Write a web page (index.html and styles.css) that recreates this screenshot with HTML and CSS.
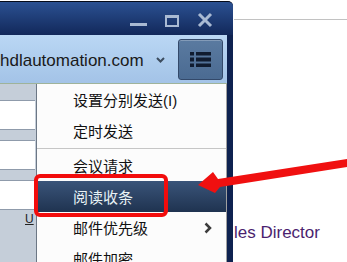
FILE: index.html
```html
<!DOCTYPE html>
<html lang="zh-CN">
<head>
    <meta charset="UTF-8">
    <meta name="viewport" content="width=device-width, initial-scale=1.0">
    <title>邮件选项</title>
    <link rel="stylesheet" href="styles.css">
</head>
<body>
    <!-- page behind the mail window -->
    <div class="page">
        <div class="page-rule"></div>
        <div class="page-title">les Director</div>
    </div>

    <div class="window">
        <div class="titlebar">
            <svg class="win-controls" width="90" height="33" viewBox="0 0 90 33">
                <rect x="0" y="21" width="17" height="3" fill="#a9bad3"/>
                <rect x="36" y="14" width="12" height="10" fill="none" stroke="#a9bad3" stroke-width="2"/>
                <rect x="35" y="13" width="14" height="3" fill="#a9bad3"/>
                <path d="M69 12 L81 24 M81 12 L69 24" stroke="#a9bad3" stroke-width="3"/>
            </svg>
        </div>

        <div class="toolbar">
            <span class="account">hdlautomation.com</span>
            <svg class="caret" width="9" height="6" viewBox="0 0 9 6">
                <polyline points="1,1 4.5,4.5 8,1" fill="none" stroke="#3c4c5e" stroke-width="2"/>
            </svg>
            <button class="menu-btn">
                <svg width="21" height="15" viewBox="0 0 21 15">
                    <rect x="0" y="0" width="4" height="3.5" fill="#101c30"/>
                    <rect x="6" y="0" width="15" height="3.5" fill="#101c30"/>
                    <rect x="0" y="5.5" width="4" height="4" fill="#101c30"/>
                    <rect x="6" y="5.5" width="15" height="4" fill="#101c30"/>
                    <rect x="0" y="11.5" width="4" height="3.5" fill="#101c30"/>
                    <rect x="6" y="11.5" width="15" height="3.5" fill="#101c30"/>
                </svg>
            </button>
        </div>

        <div class="content">
            <div class="side">
                <div class="fields">
                    <div class="field"></div>
                    <div class="field"></div>
                    <div class="field"></div>
                </div>
                <div class="side-u">U</div>
            </div>

            <ul class="menu">
                <li class="menu-item">设置分别发送(I)</li>
                <li class="menu-item">定时发送</li>
                <li class="menu-sep"></li>
                <li class="menu-item">会议请求</li>
                <li class="menu-item is-active">阅读收条</li>
                <li class="menu-item">邮件优先级
                    <svg class="sub-arrow" width="8" height="12" viewBox="0 0 8 12">
                        <polyline points="1.5,1.5 6,6 1.5,10.5" fill="none" stroke="#3d3d3d" stroke-width="2.5"/>
                    </svg>
                </li>
                <li class="menu-item">邮件加密</li>
            </ul>
        </div>
    </div>

    <!-- red annotation -->
    <div class="callout"></div>
    <svg class="arrow" width="347" height="262" viewBox="0 0 347 262">
        <polygon points="198,185 213,172 218,179 347,159 347,167 220,187 215,193" fill="#f01010"/>
    </svg>
</body>
</html>
```

FILE: styles.css
```css
body {
    margin: 0;
    width: 347px;
    height: 262px;
    overflow: hidden;
    position: relative;
    background-color: #fff;
    font-family: "Liberation Sans", "Noto Sans CJK SC", sans-serif;
}

/* background page */
.page {
    padding-left: 234px;
}
.page-rule {
    margin-top: 19px;
    border-top: 1px solid #c2c2c2;
}
.page-title {
    margin-top: 203px;
    font-size: 17px;
    line-height: 20px;
    color: #4b1f6f;
}

/* mail window */
.window {
    position: absolute;
    top: 1px;
    left: 0;
    width: 233px;
    height: 261px;
    box-sizing: border-box;
    border-top: 1px solid #050b1a;
    border-top-right-radius: 5px;
    background-color: #0e2250;
    overflow: hidden;
    display: flex;
    flex-direction: column;
}
.titlebar {
    height: 33px;
    flex: none;
    display: flex;
    justify-content: flex-end;
    padding-right: 13px;
    background: linear-gradient(#2b5192, #12285a);
}
.toolbar {
    height: 48px;
    flex: none;
    margin-right: 6px;
    padding-right: 4px;
    display: flex;
    align-items: center;
    background: linear-gradient(#bad7f4, #a3c3e7);
    border-bottom: 1px solid #9fb39a;
}
.account {
    flex: 1;
    font-size: 17px;
    color: #1a1a1a;
    margin-top: 3px;
    white-space: nowrap;
}
.caret {
    margin-right: 13px;
    margin-top: 2px;
}
.menu-btn {
    width: 45px;
    height: 41px;
    padding: 0;
    display: flex;
    align-items: center;
    justify-content: center;
    border: 1px solid #33496a;
    border-radius: 3px;
    background: linear-gradient(#5a7aa0, #4b6b92);
    box-shadow: inset 0 1px 0 rgba(255, 255, 255, 0.25);
}

.content {
    flex: 1;
    display: flex;
    margin-right: 6px;
    min-height: 0;
}
.side {
    width: 36px;
    flex: none;
    background-color: #c5ced9;
    padding-top: 16px;
}
.fields {
    display: flex;
    flex-direction: column;
    gap: 10px;
}
.field {
    width: 35px;
    height: 30px;
    box-sizing: border-box;
    background-color: #fff;
    border-top: 1px solid #8f9bab;
    border-bottom: 1px solid #8f9bab;
}
.side-u {
    margin-top: 2px;
    padding-left: 25px;
    font-size: 12px;
    line-height: 14px;
    color: #222;
    text-decoration: underline;
}

/* popup menu */
.menu {
    flex: 1;
    margin: 0;
    padding: 0;
    list-style: none;
    background-color: #fcfcfc;
    border-left: 1px solid #6c7785;
    border-right: 1px solid #a0a0a0;
}
.menu-item {
    height: 31px;
    padding-left: 36px;
    padding-right: 14px;
    display: flex;
    align-items: center;
    font-size: 15px;
    color: #111;
    white-space: nowrap;
}
.menu-item.is-active {
    background: linear-gradient(#3a5479, #1f3350);
    color: #e8f2f5;
}
.menu-sep {
    margin: 2px 0 1px;
    border-top: 1px solid #c6c6c6;
}
.sub-arrow {
    margin-left: auto;
}

.callout {
    position: absolute;
    left: 34px;
    top: 174px;
    width: 134px;
    height: 43px;
    box-sizing: border-box;
    border: 4px solid #f20c0c;
    border-radius: 6px;
}
.arrow {
    position: absolute;
    left: 0;
    top: 0;
}
```
